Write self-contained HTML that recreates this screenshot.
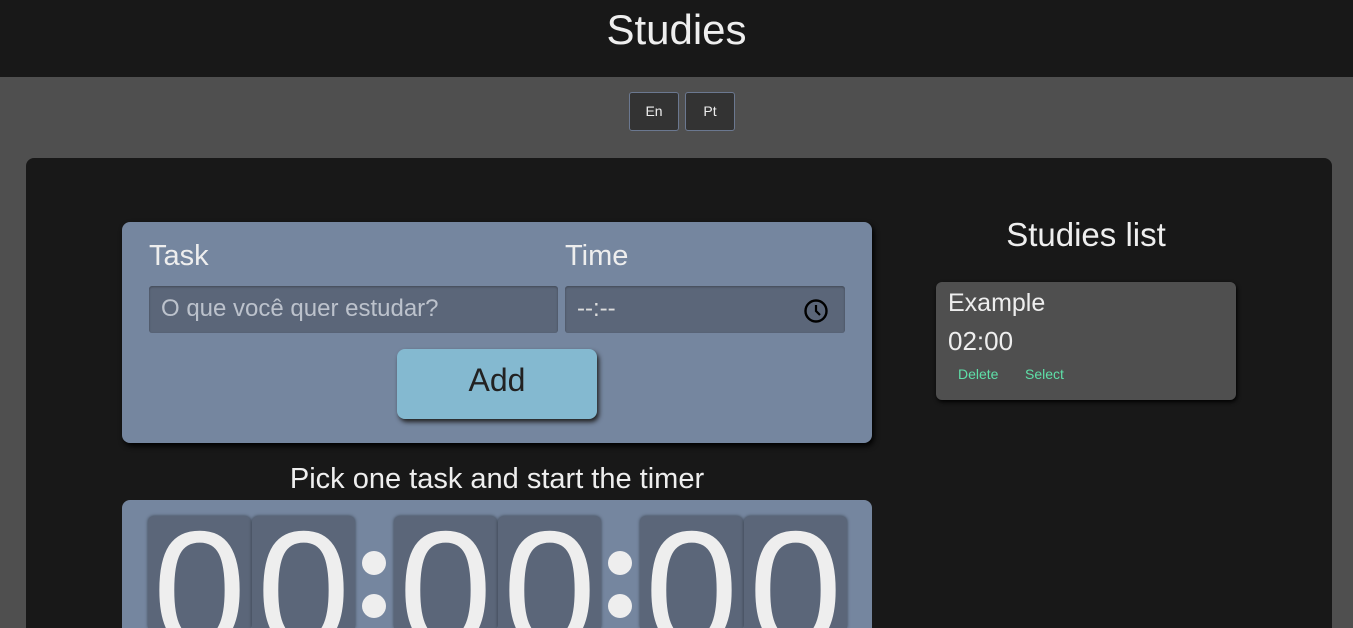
<!DOCTYPE html>
<html><head><meta charset="utf-8"><style>
*{box-sizing:border-box;margin:0;padding:0}
html,body{width:1353px;height:628px;overflow:hidden}
body{background:#4f4f4f;font-family:"Liberation Sans",sans-serif;color:#eee;position:relative}
.hdr{position:absolute;left:0;top:0;width:1353px;height:77px;background:#181818;text-align:center;font-size:42px;line-height:60px}
.lang{position:absolute;top:92px;width:50px;height:39px;border:1px solid #6b7890;border-radius:3px;background:#333;color:#eee;font-size:14px;text-align:center;line-height:36px}
.main{position:absolute;left:26px;top:158px;width:1306px;height:470px;background:#181818;border-radius:8px 8px 0 0;overflow:hidden}
.card{position:absolute;left:122px;top:222px;width:750px;height:221px;background:#75869f;border-radius:8px;box-shadow:2px 3px 6px #000}
.lbl{position:absolute;font-size:29px;top:240px}
.inp{position:absolute;top:286px;height:47px;background:#5b6679;border-radius:3px;box-shadow:inset 0 1px 2px rgba(0,0,0,.3);font-size:24px;line-height:45px;color:#bcc2cc;padding-left:12px}
.add{position:absolute;left:397px;top:349px;width:200px;height:70px;background:#84b9d0;border-radius:8px;box-shadow:2px 3px 5px #222;color:#222;font-size:32px;text-align:center;line-height:62px}
.pick{position:absolute;left:122px;width:750px;top:463px;text-align:center;font-size:29px}
.timer{position:absolute;left:122px;top:500px;width:750px;height:128px;background:#75869f;border-radius:8px 8px 0 0}
.d{position:absolute;top:516px;width:103px;height:112px;background:#5b6679;border-radius:6px 6px 0 0;box-shadow:0 0 3px rgba(0,0,0,.5);overflow:hidden}
.d span{position:absolute;left:0;width:103px;top:-10px;font-size:168px;line-height:1;text-align:center;color:#eee}
.dot{position:absolute;width:24px;height:24px;border-radius:50%;background:#eee}
.sl{position:absolute;left:936px;width:300px;top:216px;text-align:center;font-size:33px}
.item{position:absolute;left:936px;top:282px;width:300px;height:118px;background:#4f4f4f;border-radius:6px;box-shadow:1px 2px 4px #000}
</style></head><body>
<div class="hdr">Studies</div>
<div class="lang" style="left:629px">En</div>
<div class="lang" style="left:685px">Pt</div>
<div class="main"></div>
<div class="card"></div>
<div class="lbl" style="left:149px">Task</div>
<div class="lbl" style="left:565px">Time</div>
<div class="inp" style="left:149px;width:409px">O que você quer estudar?</div>
<div class="inp" style="left:565px;width:280px;color:#ddd">--:--
<svg style="position:absolute;right:16px;top:12px" width="26" height="26" viewBox="0 0 26 26"><circle cx="13" cy="13" r="10.5" fill="none" stroke="#000" stroke-width="2.4"/><path d="M13 7v6l4 4" fill="none" stroke="#000" stroke-width="2.2"/></svg></div>
<div class="add">Add</div>
<div class="pick">Pick one task and start the timer</div>
<div class="timer"></div>
<div class="d" style="left:148px"><span>0</span></div>
<div class="d" style="left:252px"><span>0</span></div>
<div class="dot" style="left:362px;top:551px"></div>
<div class="dot" style="left:362px;top:594px"></div>
<div class="d" style="left:394px"><span>0</span></div>
<div class="d" style="left:498px"><span>0</span></div>
<div class="dot" style="left:608px;top:551px"></div>
<div class="dot" style="left:608px;top:594px"></div>
<div class="d" style="left:640px"><span>0</span></div>
<div class="d" style="left:744px"><span>0</span></div>
<div class="sl">Studies list</div>
<div class="item">
<div style="position:absolute;left:12px;top:7px;font-size:25px">Example</div>
<div style="position:absolute;left:12px;top:44px;font-size:26px">02:00</div>
<div style="position:absolute;left:22px;top:84px;font-size:14px;color:#5ee0a8">Delete</div>
<div style="position:absolute;left:89px;top:84px;font-size:14px;color:#5ee0a8">Select</div>
</div>
</body></html>
